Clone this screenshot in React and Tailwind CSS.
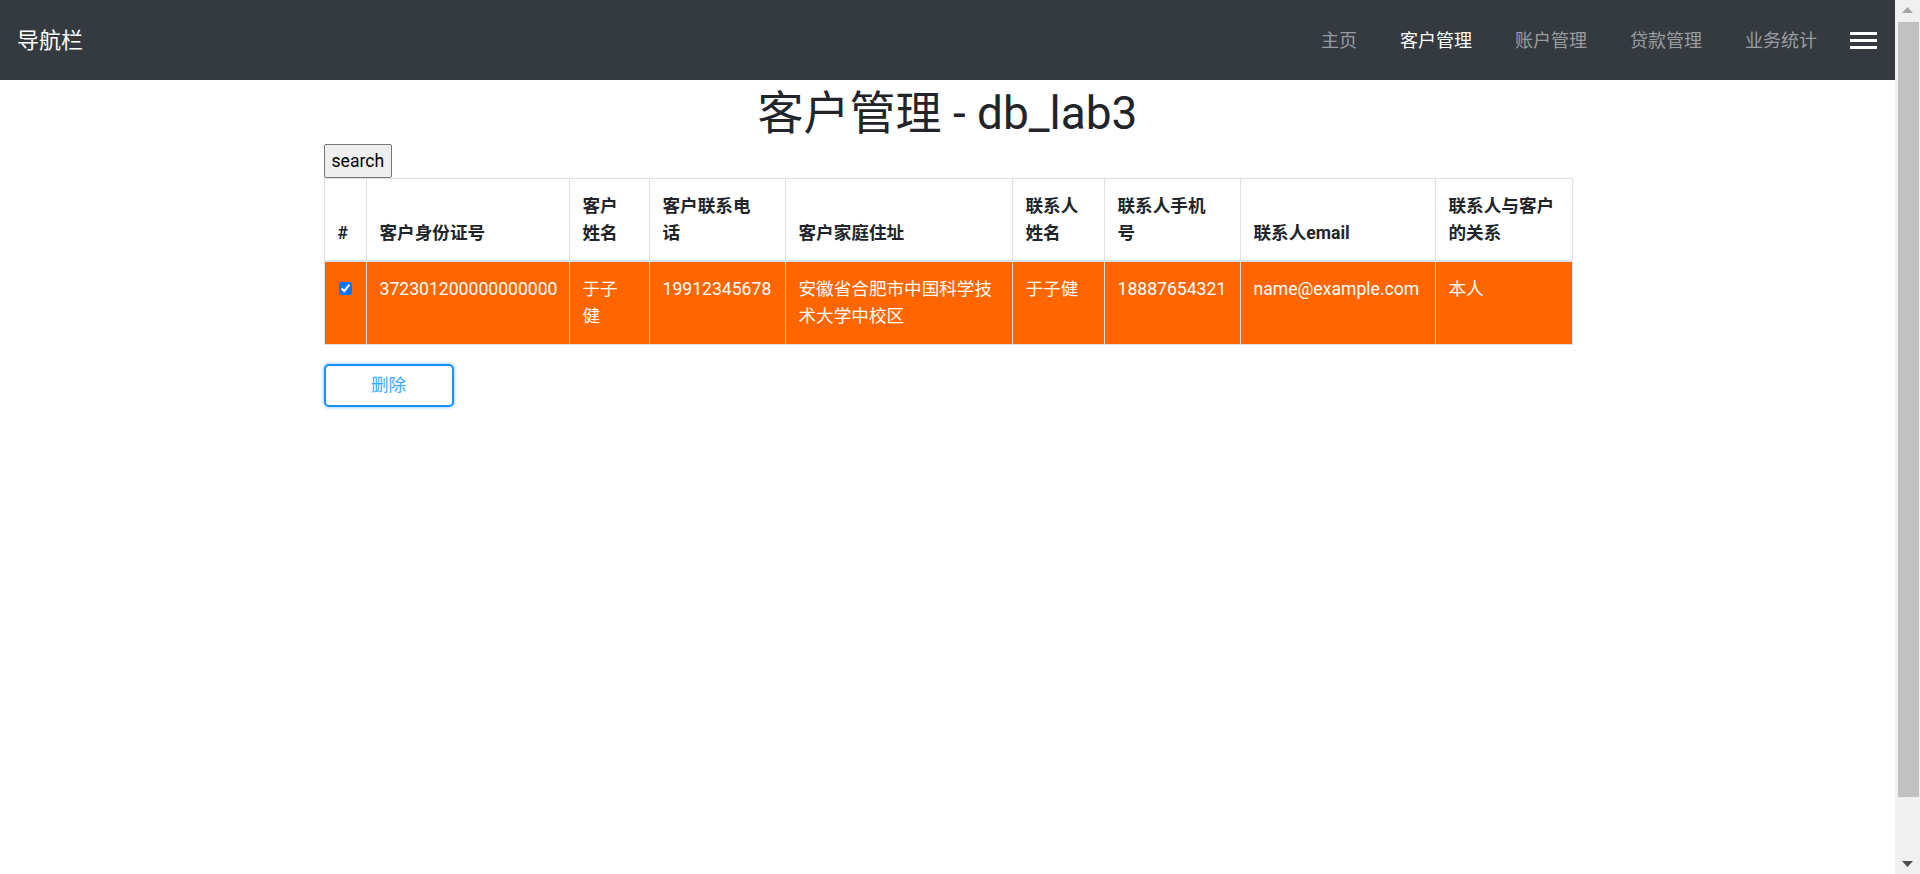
import React, { useState } from 'react';

const FONT = { fontFamily: '"Segoe UI", Roboto, "Noto Sans CJK SC", "Noto Sans", sans-serif' };

const navItems = ['主页', '客户管理', '账户管理', '贷款管理', '业务统计'];

const columns = [
  { w: 'w-[42px]', label: '#' },
  { w: 'w-[203px]', label: ['客户身份证号'] },
  { w: 'w-[80px]', label: ['客户', '姓名'] },
  { w: 'w-[136px]', label: ['客户联系电', '话'] },
  { w: 'w-[227px]', label: ['客户家庭住址'] },
  { w: 'w-[92px]', label: ['联系人', '姓名'] },
  { w: 'w-[136px]', label: ['联系人手机', '号'] },
  { w: 'w-[195px]', label: ['联系人email'] },
  { w: 'w-[137px]', label: ['联系人与客户', '的关系'] },
];

const rows = [
  {
    id: '372301200000000000',
    name: ['于子', '健'],
    phone: '19912345678',
    addr: ['安徽省合肥市中国科学技', '术大学中校区'],
    cname: '于子健',
    cphone: '18887654321',
    email: 'name@example.com',
    rel: '本人',
  },
];

function Lines({ lines }) {
  if (!Array.isArray(lines)) return lines;
  return lines.map((l, i) => (
    <div key={i} className="whitespace-nowrap">{l}</div>
  ));
}

function Navbar() {
  return (
    <nav className="h-[80px] bg-[#343a40] flex items-center pl-[17px] pr-[18px]">
      <span className="text-white text-[22px]">导航栏</span>
      <div className="ml-auto flex items-center">
        <ul className="flex items-center gap-[43px] mr-[33px]">
          {navItems.map((item) => (
            <li
              key={item}
              className={`text-[18px] ${item === '客户管理' ? 'text-white' : 'text-[#9a9da0]'}`}
            >
              {item}
            </li>
          ))}
        </ul>
        <div className="w-[27px] flex flex-col gap-[4px] mt-[1px]">
          <span className="h-[3px] bg-white block" />
          <span className="h-[3px] bg-white block" />
          <span className="h-[3px] bg-white block" />
        </div>
      </div>
    </nav>
  );
}

function Scrollbar() {
  return (
    <aside className="w-[25px] h-full bg-[#f0f0f0] flex flex-col items-center">
      <div className="h-[20px] w-full flex items-center justify-center">
        <svg width="11" height="6" viewBox="0 0 11 6"><path d="M0 6 L5.5 0 L11 6 Z" fill="#a3a3a3" /></svg>
      </div>
      <div className="mt-[2px] ml-[1px] w-[21px] h-[775px] bg-[#c1c1c1]" />
      <div className="mt-auto h-[20px] w-full flex items-center justify-center">
        <svg width="11" height="6" viewBox="0 0 11 6"><path d="M0 0 L11 0 L5.5 6 Z" fill="#505050" /></svg>
      </div>
    </aside>
  );
}

export default function App() {
  const [checked, setChecked] = useState(true);

  return (
    <div className="flex h-[874px] overflow-hidden bg-white text-[#212529]" style={FONT}>
      <main className="flex-1 min-w-0">
        <Navbar />
        <div className="w-[1248px] mx-auto">
          <h1 className="text-center text-[46px] leading-[53px] pt-[7px] pb-[4px] font-normal">
            客户管理 - db_lab3
          </h1>
          <button className="h-[34px] px-[7px] text-[17.6px] leading-[20px] bg-[#efefef] border border-[#767676] rounded-[2px] text-black">
            search
          </button>
          <table className="table-fixed border-collapse w-[1248px] text-[17.6px] leading-[27px]">
            <colgroup>
              {columns.map((c, i) => (
                <col key={i} className={c.w} />
              ))}
            </colgroup>
            <thead>
              <tr>
                {columns.map((c, i) => (
                  <th
                    key={i}
                    className="align-bottom text-left font-bold border border-[#dee2e6] border-b-2 border-b-[#dee2e6] px-[13px] pt-[14px] pb-[13px]"
                  >
                    <Lines lines={c.label} />
                  </th>
                ))}
              </tr>
            </thead>
            <tbody>
              {rows.map((r) => (
                <tr key={r.id} className="bg-[#ff6600] text-white align-top">
                  <td className="border border-[#dee2e6] px-[14px] py-[14px]">
                    <input
                      type="checkbox"
                      checked={checked}
                      onChange={() => setChecked(!checked)}
                      className="w-[13px] h-[13px] accent-[#0075ff] align-top mt-[6px]"
                    />
                  </td>
                  <td className="border border-[#dee2e6] px-[13px] py-[14px] whitespace-nowrap">{r.id}</td>
                  <td className="border border-[#dee2e6] px-[13px] py-[14px]"><Lines lines={r.name} /></td>
                  <td className="border border-[#dee2e6] px-[13px] py-[14px]">{r.phone}</td>
                  <td className="border border-[#dee2e6] px-[13px] py-[14px]"><Lines lines={r.addr} /></td>
                  <td className="border border-[#dee2e6] px-[13px] py-[14px] whitespace-nowrap">{r.cname}</td>
                  <td className="border border-[#dee2e6] px-[13px] py-[14px]">{r.cphone}</td>
                  <td className="border border-[#dee2e6] px-[13px] py-[14px] whitespace-nowrap">{r.email}</td>
                  <td className="border border-[#dee2e6] px-[13px] py-[14px]">{r.rel}</td>
                </tr>
              ))}
            </tbody>
          </table>
          <button className="mt-[19px] w-[130px] h-[43px] rounded-[5px] border-2 border-[#1890ff] bg-white text-[#40a9ff] text-[17.6px] shadow-[0_0_3px_1px_rgba(24,144,255,0.35)]">
            删除
          </button>
        </div>
      </main>
      <Scrollbar />
    </div>
  );
}
